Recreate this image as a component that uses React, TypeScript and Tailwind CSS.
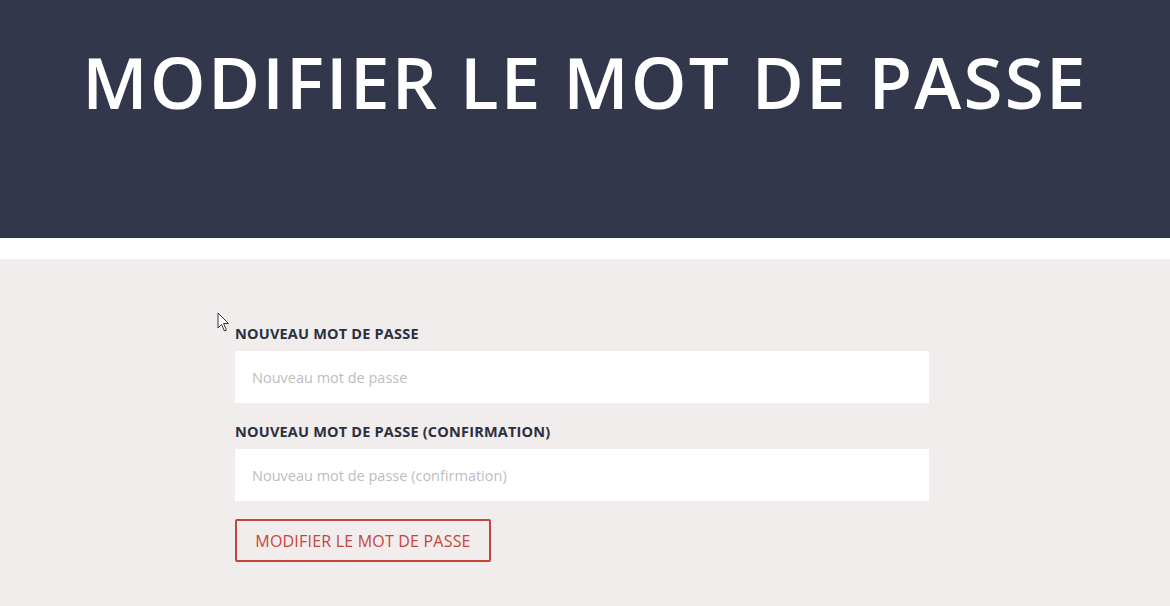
import React from 'react';

const font = { fontFamily: '"Open Sans", "Liberation Sans", sans-serif' };

const Cursor = () => (
  <svg className="absolute left-[217px] top-[312px]" width="14" height="21" viewBox="0 0 14 21">
    <path d="M1 1 L1 16 L4.5 12.5 L7.5 19 L9.5 18 L6.5 11.5 L11.5 11.5 Z" fill="#fff" stroke="#333" strokeWidth="1" strokeLinejoin="round" />
  </svg>
);

const Field = ({ label, placeholder }: { label: string; placeholder: string }) => (
  <div className="flex flex-col">
    <label className="text-[14.5px] leading-[20px] font-bold text-[#2b2f40] tracking-[0.2px] mb-[7px]">{label}</label>
    <input
      type="password"
      placeholder={placeholder}
      className="w-[694px] h-[52px] bg-white px-[17px] text-[14.5px] text-[#333] placeholder-[#bdbdbd] outline-none"
    />
  </div>
);

export default function App() {
  return (
    <div className="relative w-[1170px] h-[606px] overflow-hidden bg-[#f1eded]" style={font}>
      <header className="h-[238px] bg-[#33374b] flex justify-center pt-[37px]">
        <h1 className="text-[71px] leading-[90px] font-semibold text-white tracking-[2.2px]">MODIFIER LE MOT DE PASSE</h1>
      </header>
      <div className="h-[21px] bg-white" />
      <form className="w-[700px] mx-auto pt-[65px] flex flex-col">
        <Field label="NOUVEAU MOT DE PASSE" placeholder="Nouveau mot de passe" />
        <div className="h-[19px]" />
        <Field label="NOUVEAU MOT DE PASSE (CONFIRMATION)" placeholder="Nouveau mot de passe (confirmation)" />
        <div className="h-[18px]" />
        <button
          type="button"
          className="w-[256px] h-[43px] border-2 border-[#c9433c] rounded-[2px] text-[#c9433c] text-[16px] tracking-[0.2px] bg-transparent"
        >
          MODIFIER LE MOT DE PASSE
        </button>
      </form>
      <Cursor />
    </div>
  );
}
